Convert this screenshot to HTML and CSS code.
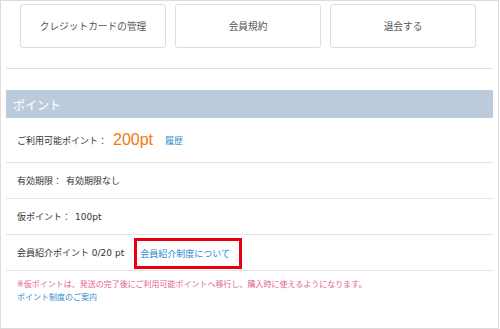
FILE: index.html
```html
<!DOCTYPE html>
<html lang="ja">
<head>
<meta charset="utf-8">
<link rel="stylesheet" href="styles.css">
</head>
<body>
<div class="frame">
  <div class="btn-row">
    <a class="btn">クレジットカードの管理</a>
    <a class="btn">会員規約</a>
    <a class="btn">退会する</a>
  </div>
  <hr class="divider">
  <section class="points">
    <h2 class="points-head">ポイント</h2>
    <div class="row row-main">
      <span class="label">ご利用可能ポイント：</span>
      <span class="big-pt">200pt</span>
      <a class="link history">履歴</a>
    </div>
    <div class="row">
      <span class="label">有効期限：</span>
      <span class="value">有効期限なし</span>
    </div>
    <div class="row">
      <span class="label">仮ポイント：</span>
      <span class="value">100pt</span>
    </div>
    <div class="row row-ref">
      <span class="label">会員紹介ポイント 0/20 pt</span>
      <a class="link ref-link">会員紹介制度について</a>
    </div>
    <div class="notes">
      <p class="note">※仮ポイントは、発送の完了後にご利用可能ポイントへ移行し、購入時に使えるようになります。</p>
      <a class="link note-link">ポイント制度のご案内</a>
    </div>
  </section>
</div>
</body>
</html>
```
FILE: styles.css
```css
html, body {
  margin: 0;
  padding: 0;
  background: #fff;
}
body {
  font-family: "DejaVu Sans", "Noto Sans CJK JP", sans-serif;
  color: #333;
}
.frame {
  box-sizing: border-box;
  width: 499px;
  height: 329px;
  border: 1px solid #dcdcdc;
  padding: 3px 5px 0 5px;
  overflow: hidden;
}
.btn-row {
  display: flex;
  gap: 9px;
  padding-left: 14px;
}
.btn {
  box-sizing: border-box;
  width: 146px;
  height: 44px;
  border: 1px solid #dedede;
  border-radius: 3px;
  display: flex;
  align-items: center;
  justify-content: center;
  font-size: 9.7px;
  color: #555;
  background: #fff;
}
.divider {
  border: 0;
  border-top: 1px solid #e2e2e2;
  margin: 20px 0 0 0;
  height: 0;
}
.points {
  margin-top: 21px;
}
.points-head {
  margin: 0;
  height: 28px;
  background: #bccbdc;
  color: #fff;
  font-size: 12px;
  font-weight: normal;
  display: flex;
  align-items: center;
  padding-left: 7px;
}
.row {
  display: flex;
  align-items: center;
  height: 35px;
  border-bottom: 1px solid #e4e4e4;
  padding-left: 11px;
  font-size: 9px;
}
.row-main {
  height: 44px;
}
.value {
  margin-left: 4px;
}
.big-pt {
  color: #ee7a10;
  font-size: 16px;
  margin-left: 6px;
  font-family: "Liberation Sans", "Noto Sans CJK JP", sans-serif;
}
.link {
  color: #2e8ccb;
}
.history {
  margin-left: 12px;
  font-size: 9px;
}
.ref-link {
  margin-left: 10px;
  border: 3px solid #e60012;
  padding: 6px 9px 6px 3px;
  font-size: 9px;
  margin-top: 2px;
}
.notes {
  padding: 7px 0 0 11px;
  font-size: 8px;
  line-height: 13px;
}
.note {
  margin: 0;
  color: #e4668a;
}
.note-link {
  display: block;
}
```
